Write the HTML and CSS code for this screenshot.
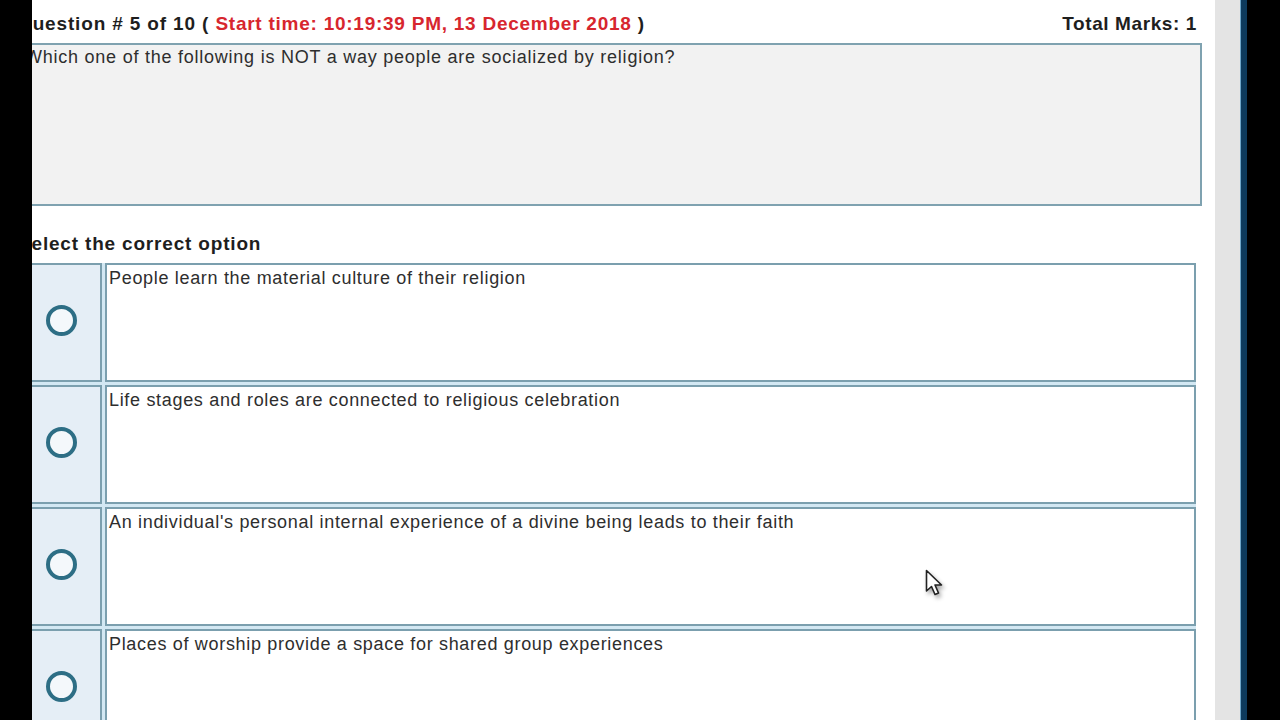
FILE: index.html
```html
<!DOCTYPE html>
<html lang="en">
<head>
<meta charset="UTF-8" />
<meta name="viewport" content="width=device-width, initial-scale=1" />
<title>Quiz - Question 5</title>
<link rel="stylesheet" href="styles.css">
</head>
<body>

<div class="edge-left"></div>

<div class="page">
  <div class="sheet">
    <div class="quiz-head">
      <div class="quiz-title">Question # 5 of 10 ( <span class="start-time">Start time: 10:19:39 PM, 13 December 2018</span> )</div>
      <div class="marks">Total Marks: 1</div>
    </div>

    <div class="question">Which one of the following is NOT a way people are socialized by religion?</div>

    <div class="select-label">Select the correct option</div>

    <div class="options">
      <div class="opt-radio"><span class="radio"></span></div>
      <div class="opt-text">People learn the material culture of their religion</div>

      <div class="opt-radio"><span class="radio"></span></div>
      <div class="opt-text">Life stages and roles are connected to religious celebration</div>

      <div class="opt-radio"><span class="radio"></span></div>
      <div class="opt-text">An individual's personal internal experience of a divine being leads to their faith</div>

      <div class="opt-radio"><span class="radio"></span></div>
      <div class="opt-text">Places of worship provide a space for shared group experiences</div>
    </div>
  </div>

  <svg class="cursor" width="22" height="30" viewBox="0 0 22 30">
    <path d="M1.5 1.5 L1.5 22 L6.5 17.5 L10 25.5 L13.5 24 L10 16 L16.5 16 Z" fill="#fff" stroke="#222" stroke-width="1.6" stroke-linejoin="round"/>
  </svg>
</div>

<div class="gutter"></div>
<div class="frame"></div>

</body>
</html>
```

FILE: styles.css
```css
body {
  margin: 0;
  background: #000;
  font-family: "Liberation Sans", Arial, sans-serif;
  display: flex;
  height: 100vh;
  overflow: hidden;
}
.edge-left {
  width: 32px;
  flex: none;
  background: #000;
}
.page {
  position: relative;
  width: 1183px;
  flex: none;
  background: #fff;
  overflow: hidden;
}
.sheet {
  margin-left: -16px;
}
.gutter {
  width: 25px;
  flex: none;
  background: #e4e4e4;
}
.frame {
  width: 6px;
  flex: none;
  background: #0d3a5c;
  border-left: 1px solid #6fa6c8;
}

.quiz-head {
  height: 43px;
  box-sizing: border-box;
  padding: 4px 18px 0 1px;
  display: flex;
  justify-content: space-between;
  align-items: center;
  font-size: 19px;
  font-weight: 700;
  letter-spacing: 0.85px;
  color: #1e1e1e;
}
.marks {
  letter-spacing: 0.6px;
}
.start-time {
  color: #d7262e;
  letter-spacing: 0.75px;
}

.question {
  height: 163px;
  box-sizing: border-box;
  margin: 0 13px 0 2px;
  padding: 2px 4px 2px 5px;
  background: #f2f2f2;
  border: 2px solid #7fa2b0;
  font-size: 18px;
  line-height: 20px;
  letter-spacing: 0.76px;
  color: #2e2e2e;
}

.select-label {
  padding: 28px 0 9px 2px;
  font-size: 19px;
  line-height: 20px;
  font-weight: 700;
  letter-spacing: 0.82px;
  color: #1e1e1e;
}

.options {
  display: grid;
  grid-template-columns: 81px 1fr;
  grid-auto-rows: 119px;
  gap: 3px;
  margin: 0 19px 0 5px;
  background: #d3e8f3;
}
.opt-radio {
  background: #e5eef6;
  border: 2px solid #7b9fae;
  display: flex;
  align-items: center;
  justify-content: center;
  padding-bottom: 4px;
}
.radio {
  width: 23px;
  height: 23px;
  border: 4px solid #2d6e85;
  border-radius: 50%;
  background: #f4f8fb;
}
.opt-text {
  background: #fff;
  border: 2px solid #7b9fae;
  padding: 3px 2px 0;
  font-size: 18px;
  line-height: 20px;
  letter-spacing: 0.68px;
  color: #2e2e2e;
}

.cursor {
  position: absolute;
  left: 893px;
  top: 569px;
  filter: drop-shadow(2px 3px 2px rgba(0,0,0,0.35));
}
```
